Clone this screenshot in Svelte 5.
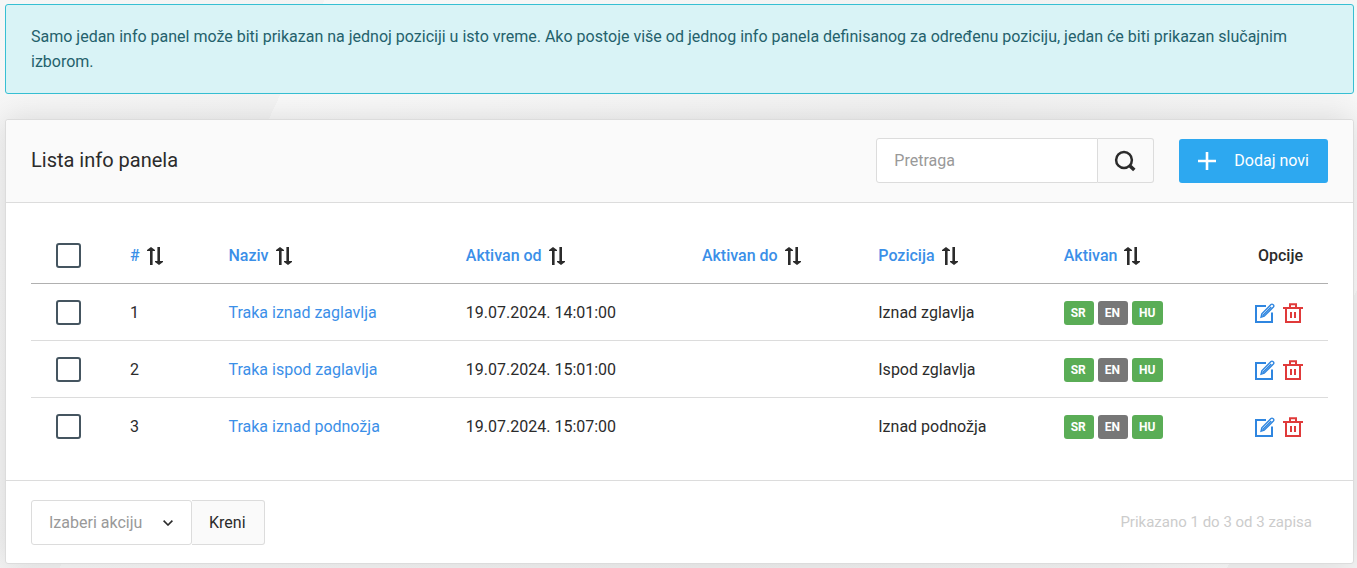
<script>
    const columns = [
        { label: "#", width: 7.6 },
        { label: "Naziv", width: 18.3 },
        { label: "Aktivan od", width: 18.2 },
        { label: "Aktivan do", width: 13.6 },
        { label: "Pozicija", width: 14.3 },
        { label: "Aktivan", width: 12.3 },
    ];

    let rows = [
        { id: 1, name: "Traka iznad zaglavlja", from: "19.07.2024. 14:01:00", to: "", position: "Iznad zglavlja", checked: false },
        { id: 2, name: "Traka ispod zaglavlja", from: "19.07.2024. 15:01:00", to: "", position: "Ispod zglavlja", checked: false },
        { id: 3, name: "Traka iznad podnožja", from: "19.07.2024. 15:07:00", to: "", position: "Iznad podnožja", checked: false },
    ];

    const languages = [
        { code: "SR", active: true },
        { code: "EN", active: false },
        { code: "HU", active: true },
    ];

    let search = "";
    let action = "";

    const toggleAll = (event) => {
        rows = rows.map(row => ({ ...row, checked: event.target.checked }));
    };

    const removeRow = (id) => {
        rows = rows.filter(row => row.id !== id);
    };
</script>

<main>
    <div class="alert" role="alert">
        Samo jedan info panel može biti prikazan na jednoj poziciji u isto vreme. Ako postoje više od jednog info panela definisanog za određenu poziciju, jedan će biti prikazan slučajnim izborom.
    </div>

    <section class="card">
        <header>
            <h1>Lista info panela</h1>
            <form class="search" on:submit|preventDefault>
                <input type="text" placeholder="Pretraga" aria-label="Pretraga" bind:value={search} />
                <button type="submit" aria-label="Traži">
                    <svg width="22" height="22" viewBox="0 0 22 22" fill="none" stroke="#2b2b2b">
                        <circle cx="10" cy="10" r="7.9" stroke-width="2.5" />
                        <path d="M15.5 15.5L20.3 20" stroke-width="3.6" />
                    </svg>
                </button>
            </form>
            <button type="button" class="add">
                <svg width="18" height="18" viewBox="0 0 18 18" stroke="#fff" stroke-width="2.6">
                    <path d="M9 0V18M0 9H18" />
                </svg>
                Dodaj novi
            </button>
        </header>

        <div class="content">
            <table>
                <colgroup>
                    <col style="width: 5.7%" />
                    {#each columns as column}
                        <col style="width: {column.width}%" />
                    {/each}
                    <col />
                </colgroup>
                <thead>
                    <tr>
                        <th><input type="checkbox" aria-label="Izaberi sve" on:change={toggleAll} /></th>
                        {#each columns as column}
                            <th>
                                <a href="#sort">{column.label}
                                    <svg class="sort" width="16" height="18" viewBox="0 0 16 18" fill="#2b2b2b">
                                        <path d="M3 18V4H0V3L4 0L8 3V4H5.6V18ZM10.4 0H13V14H16V15L12 18L8 15V14H10.4Z" />
                                    </svg>
                                </a>
                            </th>
                        {/each}
                        <th class="options">Opcije</th>
                    </tr>
                </thead>
                <tbody>
                    {#each rows as row (row.id)}
                        <tr>
                            <td><input type="checkbox" aria-label={row.name} bind:checked={row.checked} /></td>
                            <td>{row.id}</td>
                            <td><a href="#edit">{row.name}</a></td>
                            <td>{row.from}</td>
                            <td>{row.to}</td>
                            <td>{row.position}</td>
                            <td>
                                <div class="badges">
                                    {#each languages as language}
                                        <span class="badge" class:active={language.active}>{language.code}</span>
                                    {/each}
                                </div>
                            </td>
                            <td>
                                <div class="tools">
                                    <a href="#edit" aria-label="Izmeni">
                                        <svg width="20" height="20" viewBox="0 0 20 20" fill="none" stroke="#2f86e0">
                                            <path d="M11 3H1V19H17V9.5" stroke-width="2" />
                                            <path d="M6 14.3L6.8 10.8L16 1.6Q17 0.6 18.2 1.7Q19.4 2.8 18.4 4L9.2 13.2ZM7.5 12.8L16.2 4" stroke-width="1.4" />
                                        </svg>
                                    </a>
                                    <button type="button" aria-label="Obriši" on:click={() => removeRow(row.id)}>
                                        <svg width="20" height="20" viewBox="0 0 20 20" fill="none" stroke="#e03a3a" stroke-width="2">
                                            <path d="M0 5H20M3 5V19H17V5M7 5V1.2H13V5M8 9V15M12 9V15" />
                                        </svg>
                                    </button>
                                </div>
                            </td>
                        </tr>
                    {/each}
                </tbody>
            </table>
        </div>

        <footer>
            <div class="actions">
                <div class="select">
                    <select aria-label="Izaberi akciju" bind:value={action}>
                        <option value="">Izaberi akciju</option>
                        <option value="delete">Obriši</option>
                    </select>
                    <svg width="10" height="6" viewBox="0 0 10 6" fill="none" stroke="#2b2b2b" stroke-width="1.6">
                        <path d="M0.6 0.6L5 5L9.4 0.6" />
                    </svg>
                </div>
                <button type="button">Kreni</button>
            </div>
            <p>Prikazano 1 do 3 od 3 zapisa</p>
        </footer>
    </section>
</main>

<style>
    :global(body) {
        margin: 0;
        background: linear-gradient(115deg, #f6f6f6 0%, #f3f3f3 20%, #f8f8f8 20%, #f4f4f4 45%, #f1f1f1 60%, #f5f5f5 85%, #fbfbfb 92%, #f4f4f4 92%);
    }

    main {
        padding: 4px 3px 4px 5px;
        font-family: Roboto, sans-serif;
        font-size: 16px;
        line-height: 25px;
        color: #2b2b2b;
    }

    * {
        box-sizing: border-box;
    }

    button, input, select {
        font: inherit;
        color: inherit;
        margin: 0;
    }

    button {
        cursor: pointer;
    }

    svg {
        display: block;
    }

    a {
        color: #3b8fe8;
        text-decoration: none;
    }

    .alert {
        padding: 19px 25px;
        margin-bottom: 25px;
        background: #d9f3f6;
        border: 1px solid #36bfd3;
        border-radius: 3px;
        color: #24616c;
    }

    .card {
        background: #fff;
        border: 1px solid #dcdcdc;
        border-radius: 3px;
        box-shadow: 0 0 30px rgba(0, 0, 0, 0.12);
    }

    header {
        display: flex;
        align-items: center;
        padding: 18px 25px 19px;
        background: #fafafa;
        border-bottom: 1px solid #dcdcdc;
        border-radius: 3px 3px 0 0;
    }

    h1 {
        margin: 0 auto 0 0;
        font-size: 20px;
        font-weight: 400;
    }

    .search {
        display: flex;
        margin-right: 25px;
    }

    .search input {
        width: 222px;
        height: 45px;
        padding: 0 17px;
        background: #fff;
        border: 1px solid #dcdcdc;
        border-radius: 3px 0 0 3px;
    }

    .search input::placeholder {
        color: #999;
        opacity: 1;
    }

    .search button {
        width: 56px;
        padding: 0 16px;
        background: #fafafa;
        border: 1px solid #dcdcdc;
        border-left: 0;
        border-radius: 0 3px 3px 0;
    }

    .add {
        display: flex;
        align-items: center;
        gap: 18px;
        height: 44px;
        padding: 0 19px;
        background: #2da8f0;
        border: 0;
        border-radius: 3px;
        color: #fff;
    }

    .content {
        padding: 25px 25px 26px;
    }

    table {
        width: 100%;
        table-layout: fixed;
        border-collapse: collapse;
    }

    th, td {
        padding: 16px 0 15px 25px;
        text-align: left;
        white-space: nowrap;
    }

    th {
        font-weight: 500;
        padding-top: 15px;
        border-bottom: 1px solid #b0b0b0;
    }

    tbody tr + tr td {
        border-top: 1px solid #dcdcdc;
    }

    th a {
        display: flex;
        align-items: center;
        gap: 7px;
    }

    .options {
        padding-right: 25px;
        text-align: right;
    }

    input[type="checkbox"] {
        display: block;
        appearance: none;
        width: 25px;
        height: 25px;
        background: #fff;
        border: 2px solid #455560;
        border-radius: 3px;
    }

    input[type="checkbox"]:checked {
        background: #455560;
    }

    .badges {
        display: flex;
        gap: 4px;
    }

    .badge {
        padding: 0 8px 0 7px;
        background: #777;
        border-radius: 3px;
        color: #fff;
        font-size: 12px;
        font-weight: 700;
        line-height: 24px;
    }

    .badge.active {
        background: #5aad56;
    }

    .tools {
        display: flex;
        justify-content: flex-end;
        gap: 8px;
        padding-right: 25px;
    }

    .tools button {
        padding: 0;
        background: none;
        border: 0;
    }

    footer {
        display: flex;
        align-items: center;
        justify-content: space-between;
        padding: 19px 41px 18px 25px;
        border-top: 1px solid #dcdcdc;
    }

    .actions {
        display: flex;
    }

    .select {
        display: grid;
        align-items: center;
    }

    .select select, .select svg {
        grid-area: 1 / 1;
    }

    .select svg {
        justify-self: end;
        margin-right: 19px;
        pointer-events: none;
    }

    .select select {
        appearance: none;
        width: 161px;
        height: 45px;
        padding: 0 17px;
        background: #fff;
        border: 1px solid #dcdcdc;
        border-radius: 3px;
        color: #999;
    }

    .actions button {
        padding: 0 18px 0 17px;
        background: #fafafa;
        border: 1px solid #dcdcdc;
        border-left: 0;
        border-radius: 0 3px 3px 0;
    }

    footer p {
        margin: 0;
        font-size: 15px;
        color: #ccc;
    }
</style>
